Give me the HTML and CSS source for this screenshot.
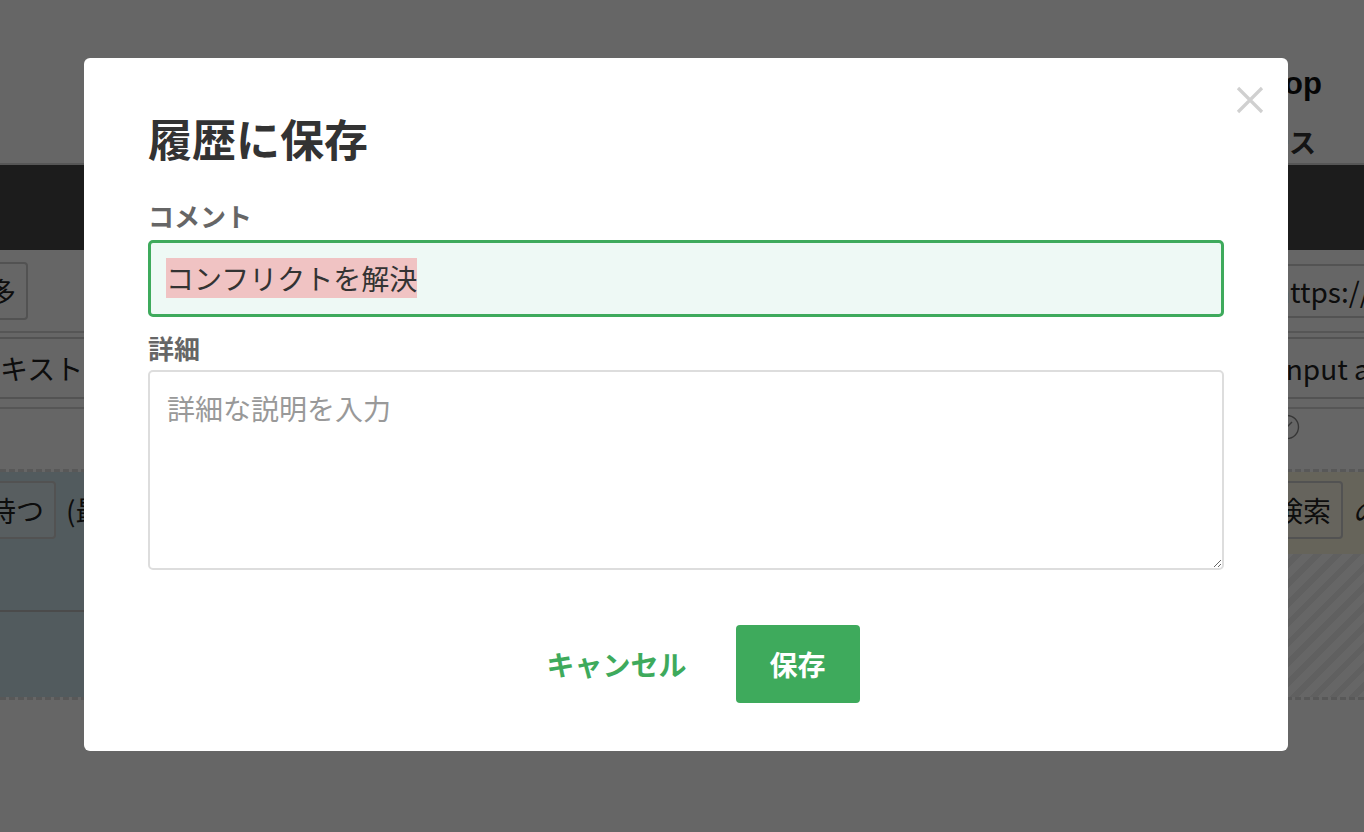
FILE: index.html
```html
<!DOCTYPE html>
<html lang="ja">
<head>
  <meta charset="UTF-8">
  <title>履歴に保存</title>
  <link rel="stylesheet" href="styles.css">
</head>
<body>
  <div class="page">
    <header class="site-head">
      <div class="brand">Workshop</div>
      <nav class="nav">リリース</nav>
    </header>
    <div class="toolbar"></div>

    <div class="row row-top">
      <span class="chip chip-left">多</span>
      <span class="url">https://www.example.com</span>
    </div>
    <div class="row row-mid">
      <span class="box box-left">キスト</span>
      <span class="box box-right">input area</span>
    </div>
    <div class="row row-icon">
      <svg class="check" viewBox="0 0 26 26" width="26" height="26">
        <circle cx="13" cy="13" r="11.5" fill="none" stroke="#888" stroke-width="1.4"/>
        <path d="M9 17L18 8" fill="none" stroke="#888" stroke-width="1.4"/>
      </svg>
    </div>

    <section class="rules">
      <div class="rule rule-blue">
        <div class="rule-line">
          <span class="chip chip-left">持つ</span>
          <span class="note">(最大)</span>
        </div>
        <div class="rule-foot"></div>
      </div>
      <div class="rule rule-side">
        <div class="rule-line rule-yellow">
          <span class="chip">検索</span>
          <span class="note italic">の</span>
        </div>
        <div class="stripes"></div>
      </div>
    </section>
  </div>

  <div class="overlay">
    <div class="modal">
      <button class="close" aria-label="閉じる">
        <svg viewBox="0 0 28 28" width="28" height="28">
          <path d="M2 2L26 26M26 2L2 26" stroke="#d0d0d0" stroke-width="3.2" fill="none"/>
        </svg>
      </button>
      <h2 class="modal-title">履歴に保存</h2>

      <label class="field-label">コメント</label>
      <div class="field"><mark class="hit">コンフリクトを解決</mark></div>

      <label class="field-label field-label-2">詳細</label>
      <textarea class="details" placeholder="詳細な説明を入力"></textarea>

      <div class="actions">
        <button class="btn btn-cancel">キャンセル</button>
        <button class="btn btn-save">保存</button>
      </div>
    </div>
  </div>
</body>
</html>
```

FILE: styles.css
```css
body {
  margin: 0;
  font-family: "Noto Sans CJK JP", "Noto Sans", sans-serif;
  color: #222;
  background: #fff;
  overflow: hidden;
}

/* page behind the dialog */
.page {
  width: 1364px;
  overflow: hidden;
}
.site-head {
  height: 165px;
  border-bottom: 2px solid #d6d6d6;
  display: flex;
  flex-direction: column;
  align-items: flex-end;
  padding-right: 42px;
  box-sizing: border-box;
  padding-top: 64px;
}
.brand {
  font-family: "Liberation Sans", sans-serif;
  font-weight: bold;
  font-size: 31px;
  line-height: 40px;
  color: #111;
}
.nav {
  font-size: 27px;
  font-weight: bold;
  line-height: 40px;
  margin-top: 18px;
  margin-right: 6px;
  color: #333;
}
.toolbar {
  height: 85px;
  background: #474747;
}
.row {
  display: flex;
  justify-content: space-between;
  align-items: center;
  border-bottom: 2px solid #d8d8d8;
}
.row-top {
  height: 81px;
}
.chip {
  border: 2px solid #ccc;
  border-radius: 4px;
  font-size: 28px;
  line-height: 54px;
  padding: 0 10px;
  background: rgba(255,255,255,0.3);
  white-space: nowrap;
}
.chip-left {
  border-left: none;
  border-radius: 0 4px 4px 0;
  padding-left: 0;
  margin-left: -12px;
}
.url {
  font-size: 28px;
  line-height: 50px;
  border-top: 2px solid #d0d0d0;
  border-bottom: 2px solid #d0d0d0;
  white-space: nowrap;
  width: 76px;
  overflow: hidden;
  text-indent: -15px;
}
.row-mid {
  height: 76px;
  align-items: flex-end;
  padding-bottom: 8px;
  box-sizing: border-box;
}
.box {
  font-size: 28px;
  line-height: 58px;
  border-top: 2px solid #d0d0d0;
  border-bottom: 2px solid #d0d0d0;
  white-space: nowrap;
  overflow: hidden;
}
.box-left {
  width: 160px;
}
.box-right {
  width: 76px;
  text-indent: -10px;
}
.row-icon {
  height: 60px;
  border-bottom: 0;
  justify-content: flex-end;
  align-items: flex-start;
  padding-right: 64px;
  padding-top: 5px;
  box-sizing: border-box;
}
.rules {
  display: grid;
  grid-template-columns: 700px 1fr;
  border-top: 3px dashed #ddd;
  border-bottom: 3px dashed #ddd;
  height: 231px;
  box-sizing: border-box;
}
.rule-blue {
  background: #cde4eb;
}
.rule-line {
  display: flex;
  gap: 10px;
  padding: 9px 0;
  height: 140px;
  box-sizing: border-box;
  align-items: flex-start;
}
.rule-blue .rule-line {
  border-bottom: 2px solid #bbb;
}
.note {
  font-size: 28px;
  line-height: 58px;
}
.italic {
  font-style: italic;
}
.rule-side {
  display: flex;
  flex-direction: column;
}
.rule-yellow {
  background: #fffae0;
  height: 82px;
  padding-left: 563px;
  gap: 9px;
}
.stripes {
  flex: 1;
  background: repeating-linear-gradient(135deg, #f0f0f0 0 6px, #fff 6px 14px);
}

/* dialog */
.overlay {
  position: fixed;
  inset: 0;
  background: rgba(0,0,0,0.6);
  display: flex;
  align-items: flex-start;
  padding: 58px 0 0 84px;
}
.modal {
  position: relative;
  width: 1204px;
  box-sizing: border-box;
  background: #fff;
  border-radius: 6px;
  padding: 54px 64px 48px;
  display: flex;
  flex-direction: column;
}
.close {
  position: absolute;
  top: 28px;
  right: 24px;
  padding: 0;
  border: 0;
  background: none;
  line-height: 0;
}
.modal-title {
  margin: 0;
  font-size: 44px;
  line-height: 52px;
  font-weight: bold;
  color: #333;
}
.field-label {
  margin-top: 34px;
  margin-bottom: 6px;
  font-size: 26px;
  line-height: 36px;
  font-weight: bold;
  color: #666;
}
.field-label-2 {
  margin-top: 13px;
  margin-bottom: 4px;
}
.field {
  border: 3px solid #3eaa5c;
  border-radius: 5px;
  background: #eef9f5;
  padding: 15px;
  font-size: 28px;
  line-height: 41px;
  color: #333;
}
.hit {
  background: #f0c3c3;
  color: #333;
}
.details {
  height: 200px;
  box-sizing: border-box;
  border: 2px solid #ddd;
  border-radius: 5px;
  padding: 16px 17px;
  font-family: inherit;
  font-size: 28px;
  line-height: 40px;
  resize: vertical;
  color: #333;
}
.details::placeholder {
  color: #999;
}
.actions {
  margin-top: 55px;
  display: flex;
  justify-content: center;
  gap: 15px;
}
.btn {
  font-family: inherit;
  font-size: 28px;
  font-weight: bold;
  line-height: 78px;
  padding: 0 34px;
  border: 0;
  border-radius: 4px;
}
.btn-cancel {
  background: none;
  color: #3eaa5c;
}
.btn-save {
  background: #3eaa5c;
  color: #fff;
}
```
